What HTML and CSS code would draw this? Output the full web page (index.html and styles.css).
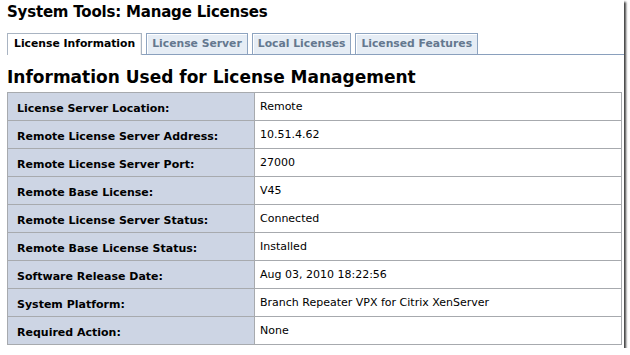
FILE: index.html
```html
<!DOCTYPE html>
<html lang="en">

<head>
    <meta charset="UTF-8">
    <title>System Tools: Manage Licenses</title>
    <link rel="stylesheet" href="styles.css">
</head>

<body>
    <div class="shot">
        <h1 class="page-title">System Tools: Manage Licenses</h1>
        <div class="tabs">
            <div class="tab active">License Information</div>
            <div class="tab">License Server</div>
            <div class="tab">Local Licenses</div>
            <div class="tab">Licensed Features</div>
        </div>
        <h2 class="section-title">Information Used for License Management</h2>
        <table class="info">
            <tr><th>License Server Location:</th><td>Remote</td></tr>
            <tr><th>Remote License Server Address:</th><td>10.51.4.62</td></tr>
            <tr><th>Remote License Server Port:</th><td>27000</td></tr>
            <tr><th>Remote Base License:</th><td>V45</td></tr>
            <tr><th>Remote License Server Status:</th><td>Connected</td></tr>
            <tr><th>Remote Base License Status:</th><td>Installed</td></tr>
            <tr><th>Software Release Date:</th><td>Aug 03, 2010 18:22:56</td></tr>
            <tr><th>System Platform:</th><td>Branch Repeater VPX for Citrix XenServer</td></tr>
            <tr><th>Required Action:</th><td>None</td></tr>
        </table>
    </div>
</body>

</html>
```

FILE: styles.css
```css
* {
    box-sizing: border-box;
    margin: 0;
}

body {
    margin: 0;
    background: #fff;
    font-family: "DejaVu Sans", Verdana, sans-serif;
    color: #000;
}

.shot {
    width: 624px;
    height: 348px;
    background: #fff;
    box-shadow: 2px 2px 2px rgba(0, 0, 0, 0.75);
    padding: 3px 2px 0 7px;
    overflow: hidden;
}

.page-title {
    font-size: 15px;
    font-weight: bold;
    line-height: 18px;
    letter-spacing: -0.2px;
}

.tabs {
    display: flex;
    gap: 4px;
    margin-top: 12px;
    margin-right: -2px;
    border-bottom: 1px solid #8aa0bd;
    height: 22px;
}

.tab {
    height: 21px;
    padding: 0 5px;
    font-size: 10.8px;
    font-weight: bold;
    line-height: 20px;
    color: #64788f;
    background: #e6edf5;
    border: 1px solid #8ea4c0;
    border-bottom: none;
    box-shadow: inset 1px 1px 0 #fff;
}

.tab.active {
    height: 22px;
    padding: 0 6px;
    background: #fff;
    color: #000;
    border-color: #a9b4c2;
    box-shadow: inset -1px 0 0 #eee;
}

.section-title {
    font-size: 17px;
    font-weight: bold;
    line-height: 20px;
    margin-top: 12px;
}

.info {
    border-collapse: collapse;
    width: 615px;
    margin-top: 5px;
    border: 1px solid #b4b8bc;
}

.info tr {
    height: 28px;
}

.info th,
.info td {
    border: 1px solid #a7aaae;
    font-size: 11px;
    line-height: 13px;
    text-align: left;
}

.info th {
    width: 247px;
    background: #cdd5e4;
    font-weight: bold;
    padding: 4px 6px 0 9px;
}

.info td {
    background: #fff;
    padding: 1px 6px 1px 5px;
}
```
